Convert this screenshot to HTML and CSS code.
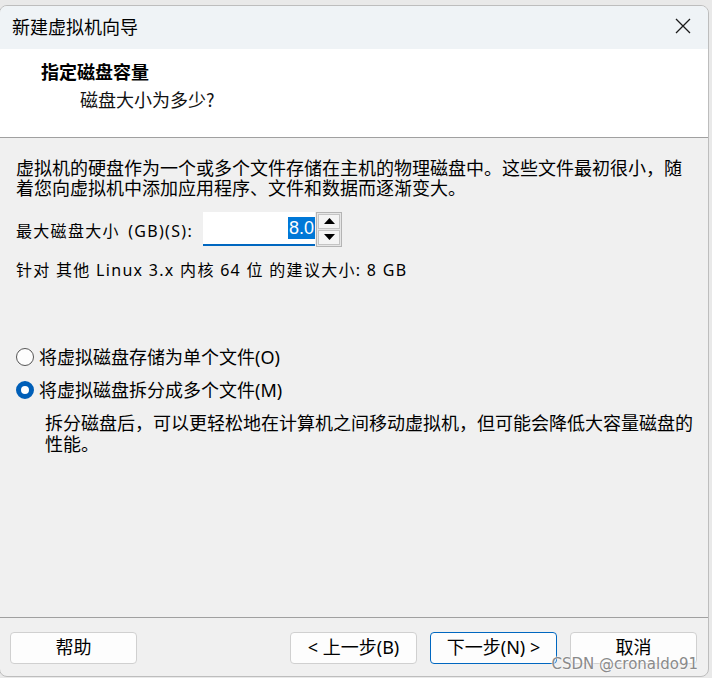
FILE: index.html
```html
<!DOCTYPE html>
<html lang="zh">
<head>
<meta charset="utf-8">
<link rel="stylesheet" href="styles.css">
</head>
<body>
<div class="window">
  <div class="titlebar">
    <span class="title">新建虚拟机向导</span>
    <svg class="close" width="16" height="16" viewBox="0 0 16 16"><path d="M1 1 L15 15 M15 1 L1 15" stroke="#1a1a1a" stroke-width="1.3" fill="none"/></svg>
  </div>
  <div class="header">
    <div class="h-title">指定磁盘容量</div>
    <div class="h-sub">磁盘大小为多少?</div>
  </div>
  <div class="content">
    <p class="desc">虚拟机的硬盘作为一个或多个文件存储在主机的物理磁盘中。这些文件最初很小，随着您向虚拟机中添加应用程序、文件和数据而逐渐变大。</p>
    <div class="size-row">
      <span class="label">最大磁盘大小 (GB)(S):</span>
      <div class="input"><span class="sel">8.0</span></div>
      <div class="spinner">
        <div class="spin-btn"><svg width="11" height="6" viewBox="0 0 11 6"><path d="M0 6 L5.5 0 L11 6 Z" fill="#000"/></svg></div>
        <div class="spin-btn"><svg width="11" height="6" viewBox="0 0 11 6"><path d="M0 0 L5.5 6 L11 0 Z" fill="#000"/></svg></div>
      </div>
    </div>
    <p class="rec">针对 其他 Linux 3.x 内核 64 位 的建议大小: 8 GB</p>
    <div class="options">
      <label class="radio"><span class="dot"></span>将虚拟磁盘存储为单个文件(O)</label>
      <label class="radio"><span class="dot checked"></span>将虚拟磁盘拆分成多个文件(M)</label>
      <p class="opt-desc">拆分磁盘后，可以更轻松地在计算机之间移动虚拟机，但可能会降低大容量磁盘的性能。</p>
    </div>
  </div>
  <div class="footer">
    <button class="btn">帮助</button>
    <div class="spacer"></div>
    <button class="btn">&lt; 上一步(B)</button>
    <button class="btn primary">下一步(N) &gt;</button>
    <button class="btn">取消</button>
  </div>
  <div class="watermark">CSDN @cronaldo91</div>
</div>
</body>
</html>
```
FILE: styles.css
```css
html, body {
  margin: 0;
  padding: 0;
  background: #e9e9e9;
}
body {
  width: 712px;
  height: 678px;
  overflow: hidden;
  font-family: "Noto Sans", "Noto Sans CJK SC", sans-serif;
  color: #000;
}
.window {
  position: relative;
  box-sizing: border-box;
  margin-top: 5px;
  margin-left: -1px;
  width: 710px;
  height: 672px;
  border: 1px solid #bdbdbd;
  border-radius: 8px;
  background: #f0f0f0;
  overflow: hidden;
  display: flex;
  flex-direction: column;
}
.titlebar {
  height: 43px;
  flex: none;
  box-sizing: border-box;
  background: #eff3f6;
  display: flex;
  align-items: center;
  justify-content: space-between;
  padding: 0 17px 3px 12px;
}
.title {
  font-family: "Noto Sans CJK SC", sans-serif;
  font-size: 18px;
  line-height: 20px;
}
.header {
  flex: none;
  height: 88px;
  background: #fff;
  border-bottom: 1px solid #a0a0a0;
}
.h-title {
  font-family: "Noto Sans CJK SC", sans-serif;
  font-weight: 700;
  font-size: 18px;
  line-height: 20px;
  margin: 12px 0 0 41px;
}
.h-sub {
  font-family: "Noto Sans CJK SC", sans-serif;
  font-size: 18px;
  line-height: 20px;
  margin: 8px 0 0 80px;
  color: #111;
}
.content {
  flex: 1;
  padding: 19px 0 0 16px;
}
.desc {
  margin: 0;
  width: 680px;
  font-size: 18px;
  line-height: 20px;
  font-family: "Noto Sans CJK SC", sans-serif;
}
.size-row {
  display: flex;
  align-items: center;
  margin-top: 15px;
  height: 34px;
}
.label {
  font-size: 16px;
  letter-spacing: 1.3px;
  word-spacing: 3px;
  width: 187px;
  padding-top: 2px;
}
.input {
  box-sizing: border-box;
  width: 112px;
  height: 34px;
  background: #fff;
  border-bottom: 2px solid #0067c0;
  display: flex;
  align-items: center;
  justify-content: flex-end;
}
.sel {
  background: #0078d7;
  color: #fff;
  font-family: "Liberation Sans", sans-serif;
  font-size: 18px;
  line-height: 22px;
  padding: 0 1px;
}
.spinner {
  box-sizing: border-box;
  width: 26px;
  height: 35px;
  border: 1px solid #b4b4b4;
  background: #e6e6e6;
  display: flex;
  flex-direction: column;
  gap: 1px;
  padding: 1px;
  margin-left: 1px;
}
.spin-btn {
  flex: 1;
  border: 1px solid #c4c4c4;
  background: #f4f4f4;
  display: flex;
  align-items: center;
  justify-content: center;
}
.rec {
  margin: 13px 0 0;
  font-size: 16px;
  letter-spacing: 1.3px;
  line-height: 22px;
}
.options {
  margin-top: 65px;
}
.radio {
  display: flex;
  align-items: center;
  gap: 5px;
  font-size: 18px;
  line-height: 22px;
  height: 22px;
  margin-bottom: 11px;
}
.dot {
  box-sizing: border-box;
  width: 18px;
  height: 18px;
  border-radius: 50%;
  border: 1px solid #555;
  background: #fdfdfd;
  flex: none;
}
.dot.checked {
  border: 5px solid #005fb8;
  background: #fff;
}
.opt-desc {
  margin: 0 0 0 29px;
  width: 655px;
  font-size: 18px;
  line-height: 21px;
  font-family: "Noto Sans CJK SC", sans-serif;
}
.footer {
  flex: none;
  box-sizing: border-box;
  height: 59px;
  border-top: 1px solid #a0a0a0;
  display: flex;
  align-items: flex-start;
  gap: 13px;
  padding: 14px 11px 0 10px;
}
.spacer {
  flex: 1;
}
.btn {
  width: 127px;
  height: 32px;
  box-sizing: border-box;
  border: 1px solid #d0d0d0;
  border-radius: 4px;
  background: #fdfdfd;
  font-family: "Noto Sans", "Noto Sans CJK SC", sans-serif;
  font-size: 18px;
  line-height: 18px;
  color: #000;
  padding: 0 0 3px;
}
.btn.primary {
  border-color: #0067c0;
}
.watermark {
  position: absolute;
  right: 10px;
  bottom: 4px;
  font-family: "DejaVu Sans", sans-serif;
  font-size: 15px;
  line-height: 15px;
  color: #8a8a8a;
  text-shadow: 0 0 2px #fff, 0 0 2px #fff;
}
```
